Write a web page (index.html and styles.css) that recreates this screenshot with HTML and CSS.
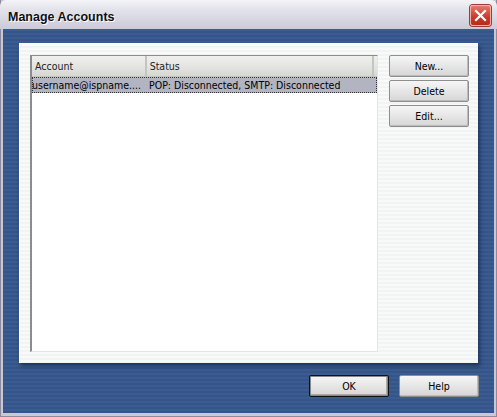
FILE: index.html
```html
<!DOCTYPE html>
<html>
<head>
<meta charset="utf-8">
<link rel="stylesheet" href="styles.css">
</head>
<body>
<div class="window">
  <div class="titlebar">
    <span class="title">Manage Accounts</span>
    <span class="close">
      <svg width="21" height="21" viewBox="0 0 21 21">
        <path d="M6 6 L15 15 M15 6 L6 15" stroke="#fff" stroke-width="2.2" stroke-linecap="square"/>
      </svg>
    </span>
  </div>
  <div class="client">
    <div class="panel">
      <div class="list">
        <div class="list-head">
          <div class="col col-account">Account</div>
          <div class="col col-status">Status</div>
          <div class="col col-rest"></div>
        </div>
        <div class="row selected">
          <div class="cell cell-account">username@ispname....</div>
          <div class="cell cell-status">POP: Disconnected, SMTP: Disconnected</div>
        </div>
      </div>
      <div class="side-buttons">
        <button class="btn">New...</button>
        <button class="btn">Delete</button>
        <button class="btn">Edit...</button>
      </div>
    </div>
    <div class="footer">
      <button class="btn default">OK</button>
      <button class="btn">Help</button>
    </div>
  </div>
</div>
</body>
</html>
```
FILE: styles.css
```css
html, body {
  margin: 0;
  padding: 0;
  background: #ffffff;
}
.window {
  width: 497px;
  height: 417px;
  box-sizing: border-box;
  display: flex;
  flex-direction: column;
  background: #c9c9d6;
  border: 1px solid #8a8aa0;
  border-top: none;
  font-family: "DejaVu Sans Condensed", "DejaVu Sans", sans-serif;
  font-size: 10.5px;
  color: #000;
}
.titlebar {
  height: 29px;
  flex: none;
  display: flex;
  align-items: center;
  justify-content: space-between;
  padding: 0 5px 0 7px;
  background: linear-gradient(#f4f4f8 0%, #e4e4ec 30%, #d6d6e2 70%, #cacad8 100%);
  border-radius: 6px 6px 0 0;
  box-sizing: border-box;
  margin: 0 -1px;
}
.title {
  font-family: "Liberation Sans", Arial, sans-serif;
  font-weight: bold;
  font-size: 12.5px;
  color: #111;
  text-shadow: 1px 1px 0 #ffffff;
  padding-top: 5px;
  padding-left: 1px;
}
.close {
  width: 21px;
  height: 21px;
  border-radius: 3px;
  background: linear-gradient(#e87d72, #c8382a 60%, #b22a1c);
  box-shadow: inset 0 0 0 1px #f6b0a8, 0 0 0 1px #9a3a32;
  display: flex;
  margin-top: 2px;
  margin-right: 1px;
}
.client {
  flex: 1;
  margin: 0 2px 3px 2px;
  display: flex;
  flex-direction: column;
  background: repeating-linear-gradient(#3b5c8e 0px, #3b5c8e 2px, #34548a 2px, #34548a 4px);
  padding: 14px 16px 16px 16px;
}
.panel {
  flex: 1;
  display: flex;
  gap: 11px;
  padding: 11px 10px 11px 10px;
  background: repeating-linear-gradient(#f8f9f9 0px, #f8f9f9 2px, #f2f3f3 2px, #f2f3f3 4px);
  border-top: 1px solid #ffffff;
  border-left: 1px solid #ffffff;
  box-shadow: 2px 3px 4px rgba(10, 25, 60, 0.55);
}
.list {
  width: 348px;
  box-sizing: border-box;
  background: #ffffff;
  border-top: 1px solid #8c8c8c;
  border-left: 2px solid #8c8c8c;
  border-right: 1px solid #e4e4e4;
  border-bottom: 1px solid #e4e4e4;
}
.list-head {
  display: flex;
  height: 20px;
  background: linear-gradient(#f0f0ee, #e2e2df 60%, #d6d6d2);
  border-bottom: 1px solid #c5c5c2;
}
.col {
  display: flex;
  align-items: center;
  padding-left: 3px;
  box-sizing: border-box;
  color: #222;
}
.col-account {
  width: 116px;
  border-right: 2px solid #c4c4c2;
}
.col-status {
  width: 230px;
  border-right: 2px solid #c4c4c2;
}
.col-rest {
  flex: 1;
}
.row {
  display: flex;
  height: 16px;
  align-items: center;
  box-sizing: border-box;
}
.row.selected {
  background: #b2b4c2;
  outline: 1px dotted #333;
  outline-offset: -1px;
}
.cell-account {
  width: 117px;
  padding-left: 0;
  white-space: nowrap;
  overflow: hidden;
  box-sizing: border-box;
}
.cell-status {
  padding-left: 0;
  white-space: nowrap;
}
.side-buttons {
  display: flex;
  flex-direction: column;
  gap: 3px;
}
.btn {
  width: 80px;
  height: 22px;
  box-sizing: border-box;
  font-family: "DejaVu Sans Condensed", "DejaVu Sans", sans-serif;
  font-size: 10.5px;
  color: #000;
  padding: 0;
  border: 1px solid #8e8e8e;
  border-radius: 2px;
  background: linear-gradient(#f6f6f6, #e6e6e6 50%, #d6d6d6);
  box-shadow: inset -1px -1px 0 #bcbcbc;
}
.footer {
  display: flex;
  justify-content: flex-end;
  gap: 10px;
  padding-top: 12px;
  margin-right: -1px;
}
.btn.default {
  border: 1px solid #111;
  box-shadow: inset 0 0 0 1px #888, inset -1px -1px 0 1px #aaa;
}
```
